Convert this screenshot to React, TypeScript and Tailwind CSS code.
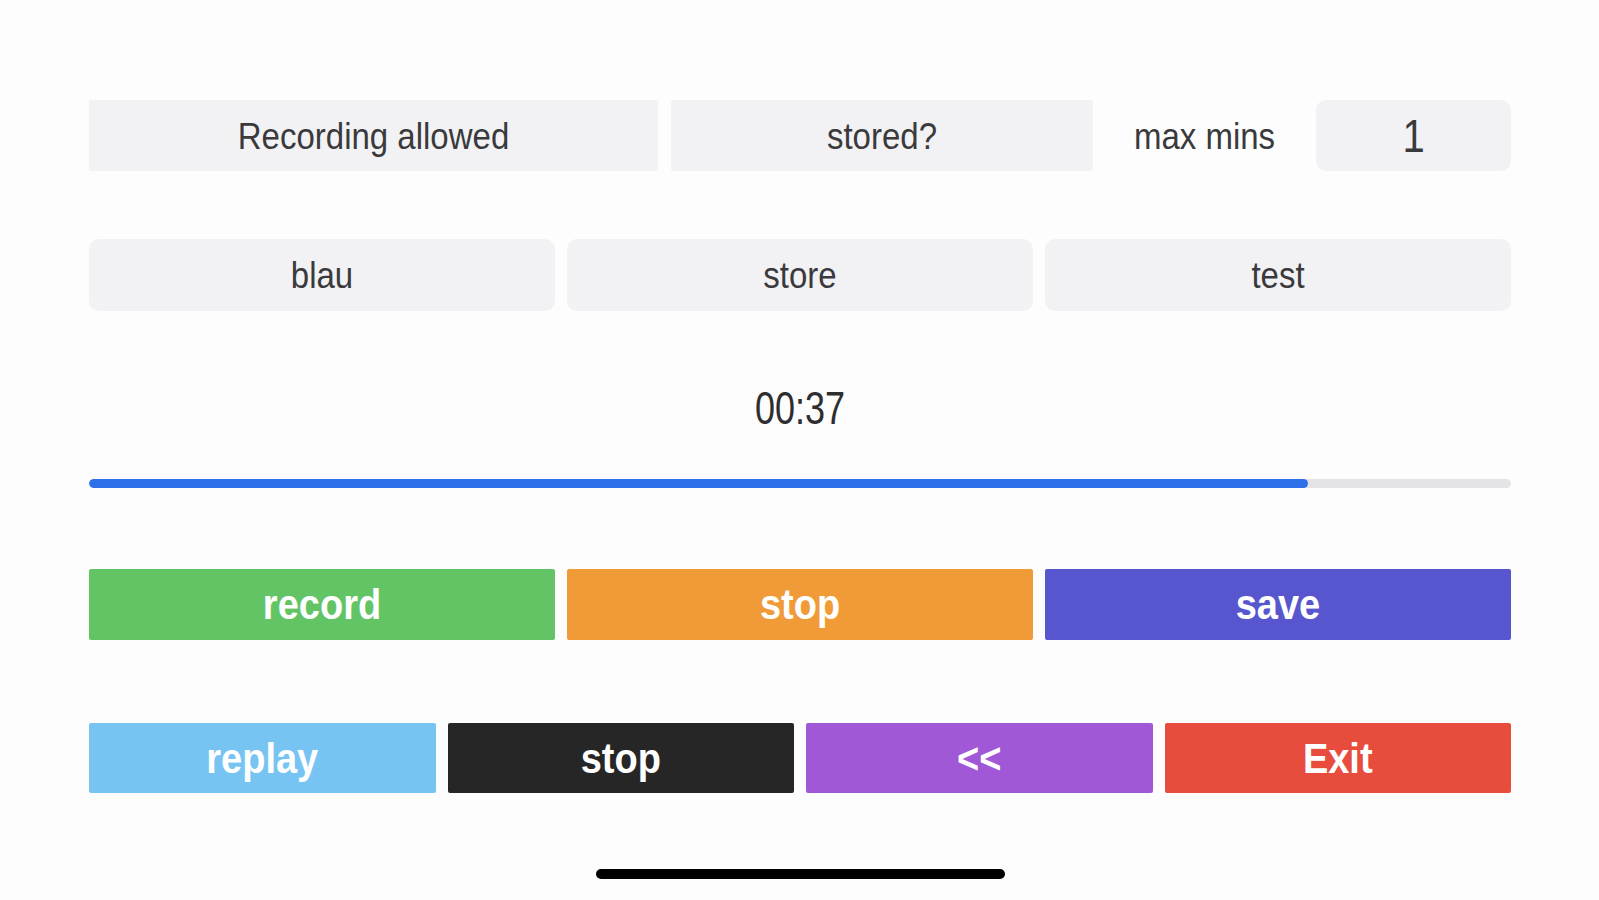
import React from "react";

// Recorder control panel — two rows of settings, a timer with progress, and action buttons.

const sans = { fontFamily: '"Liberation Sans", Arial, sans-serif' };

// the reference UI uses a tall, narrow system face; stretch the text a bit vertically
function Tall({ children, className = "" }: { children: React.ReactNode; className?: string }) {
  return <span className={`inline-block origin-center scale-y-[1.14] ${className}`}>{children}</span>;
}

function GrayBox({
  children,
  className = "",
}: {
  children: React.ReactNode;
  className?: string;
}) {
  return (
    <div
      className={`flex items-center justify-center bg-[#f2f2f5] text-[#3a3a3c] text-[33px] ${className}`}
    >
      <Tall>{children}</Tall>
    </div>
  );
}

function ActionButton({ label, color }: { label: string; color: string }) {
  return (
    <button
      className={`flex-1 h-full flex items-center justify-center text-white font-bold text-[38px] rounded-[2px] ${color}`}
    >
      <Tall>{label}</Tall>
    </button>
  );
}

export default function App() {
  const progress = 85.7;

  return (
    <main className="min-h-screen w-full bg-[#fdfdfd] pl-[89px] pr-[88px] pt-[100px]" style={sans}>
      {/* settings row */}
      <div className="flex h-[71px] items-stretch">
        <GrayBox className="w-[569px] rounded-[3px]">Recording allowed</GrayBox>
        <GrayBox className="ml-[13px] w-[422px] rounded-[3px]">stored?</GrayBox>
        <div className="flex-1 flex items-center justify-center text-[33px] text-[#3a3a3c]">
          <Tall>max mins</Tall>
        </div>
        <GrayBox className="w-[195px] rounded-[10px] text-[40px] text-[#2c2c2e]">1</GrayBox>
      </div>

      {/* file row */}
      <div className="mt-[68px] flex h-[72px] gap-[12px]">
        <GrayBox className="flex-1 rounded-[10px]">blau</GrayBox>
        <GrayBox className="flex-1 rounded-[10px]">store</GrayBox>
        <GrayBox className="flex-1 rounded-[10px]">test</GrayBox>
      </div>

      {/* timer */}
      <div className="mt-[67px] h-[60px] flex items-center justify-center text-[36px] text-[#2e2e30]">
        <span className="inline-block origin-center scale-y-[1.3]">00:37</span>
      </div>

      <div className="mt-[41px] h-[9px] w-full rounded-full bg-[#e4e4e6] overflow-hidden">
        <div className="h-full rounded-full bg-[#2d6fe8]" style={{ width: `${progress}%` }} />
      </div>

      {/* record controls */}
      <div className="mt-[81px] flex h-[71px] gap-[12px]">
        <ActionButton label="record" color="bg-[#63c466]" />
        <ActionButton label="stop" color="bg-[#f09b37]" />
        <ActionButton label="save" color="bg-[#5756ce]" />
      </div>

      {/* playback controls */}
      <div className="mt-[83px] flex h-[70px] gap-[12px]">
        <ActionButton label="replay" color="bg-[#77c4f3]" />
        <ActionButton label="stop" color="bg-[#262626]" />
        <ActionButton label="<<" color="bg-[#a158d6]" />
        <ActionButton label="Exit" color="bg-[#e84c3d]" />
      </div>

      {/* home indicator */}
      <div className="mt-[76px] flex justify-center">
        <div className="h-[10px] w-[409px] rounded-full bg-black" />
      </div>
    </main>
  );
}
